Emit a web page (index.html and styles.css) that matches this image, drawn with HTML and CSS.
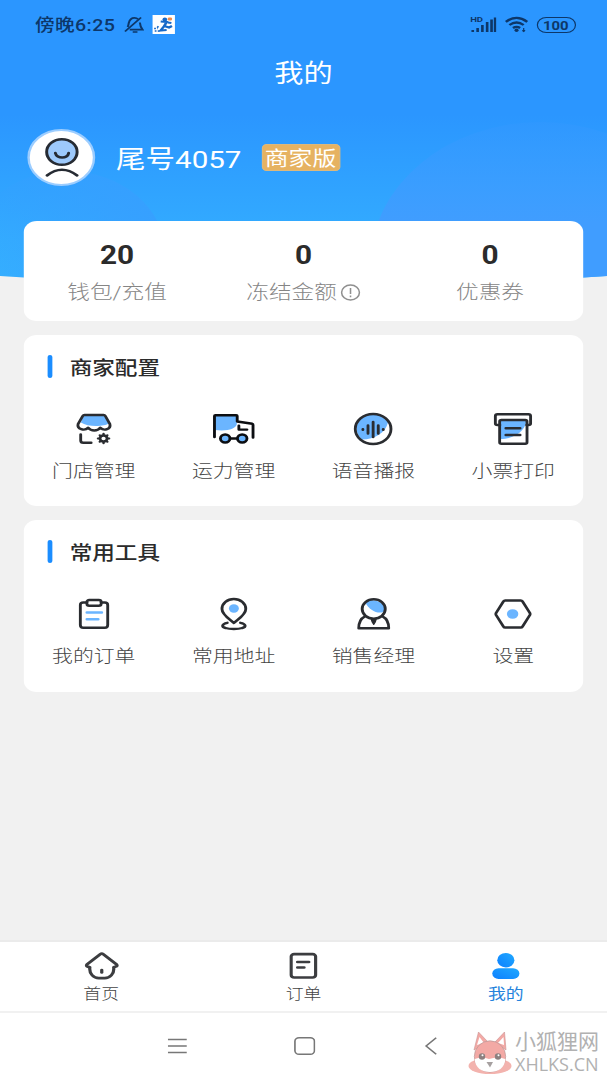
FILE: index.html
```html
<!DOCTYPE html>
<html lang="zh-CN">
  <head>
    <meta charset="UTF-8" />
    <meta name="viewport" content="width=device-width, initial-scale=1.0" />
    <title>我的</title>
    <link rel="stylesheet" href="styles.css" />
  </head>
  <body>
    <div class="screen">
      <!-- Blue backdrop -->
      <svg class="backdrop" viewBox="0 0 510 300">
        <defs>
          <linearGradient id="sky" x1="0" y1="0" x2="0" y2="1">
            <stop offset="0" stop-color="#2b96ff" />
            <stop offset="0.38" stop-color="#2b96ff" />
            <stop offset="0.8" stop-color="#33acff" />
            <stop offset="1" stop-color="#36b0ff" />
          </linearGradient>
          <linearGradient id="bubbleRight" x1="0" y1="0" x2="0" y2="1">
            <stop offset="0" stop-color="#3c98ff" stop-opacity="0.2" />
            <stop offset="0.35" stop-color="#409dff" />
            <stop offset="1" stop-color="#409dff" />
          </linearGradient>
          <linearGradient id="bubbleLeft" x1="0" y1="0.3" x2="1" y2="0">
            <stop offset="0" stop-color="#379fff" stop-opacity="0" />
            <stop offset="1" stop-color="#379fff" />
          </linearGradient>
          <clipPath id="curve"><path d="M0 0H510V276Q255 297 0 276Z" /></clipPath>
        </defs>
        <g clip-path="url(#curve)">
          <rect width="510" height="300" fill="url(#sky)" />
          <circle cx="56" cy="254" r="83" fill="url(#bubbleLeft)" />
          <circle cx="454" cy="265" r="143" fill="url(#bubbleRight)" />
        </g>
      </svg>

      <!-- Status bar -->
      <div class="status">
        <span class="time">傍晚6:25</span>
        <svg class="bell" width="17" height="18" viewBox="0 0 17 18">
          <path d="M3.200 11C4 9.500 3.900 8.500 4.200 7C4.800 4 6.500 1.800 9 1.800C10.200 1.800 11.300 2.300 12 3.200M13.500 6.500C13.700 9.500 14 11 15.800 13.700H5" />
          <path d="M7.500 16H11.500M1 15.500L14.500 1.500" />
        </svg>
        <svg class="app" width="19" height="19" viewBox="0 0 19 19">
          <rect width="19" height="19" fill="#fff" />
          <circle cx="10.500" cy="4.500" r="2" fill="#1769c8" />
          <rect x="13" y="2.500" width="3.500" height="3" rx="1" fill="#ee8b4b" />
          <path d="M7 6.500L12 7L10 11L14 12.500L16.500 11M10 11L7 15.500L12 15M13 7.500L16 8" fill="none" stroke="#1769c8" stroke-width="2.200" />
          <path d="M1.500 13.500H4.500M2 16H6M4 11.500L6 13" fill="none" stroke="#1769c8" stroke-dasharray="1.500 1" />
        </svg>
        <span class="grow"></span>
        <svg class="signal" width="22" height="17" viewBox="0 0 22 17">
          <text x="0" y="6.300">HD</text>
          <path d="M2.200 16V14M6.300 16V12M10.300 16V9M14.300 16V6M18 16V3.500M21 16V1.500" />
        </svg>
        <svg class="wifi" width="20" height="17" viewBox="0 0 20 17">
          <path d="M1 5.800Q10 -2 19 5.800M4 9Q10 4 16 9M7 12Q10 9.800 13 12" />
          <circle cx="10" cy="14.200" r="1.700" />
          <path class="thin" d="M16 12V15.500M14.800 14.400L16 15.600L17.200 14.400" />
        </svg>
        <span class="battery">100</span>
      </div>

      <h1 class="title">我的</h1>

      <!-- Profile -->
      <div class="profile">
        <div class="avatar">
          <svg width="30" height="42" viewBox="0 0 30 42">
            <circle cx="15" cy="16" r="12.800" fill="#9dc9fb" />
            <path d="M9.500 17C10.500 23 20 23 20.700 17M2.500 39.500Q15 28 27.800 39.500" />
          </svg>
        </div>
        <span class="name">尾号4057</span>
        <span class="badge">商家版</span>
      </div>

      <main class="content">
        <section class="card stats">
          <div class="stat"><b>20</b><span>钱包/充值</span></div>
          <div class="stat">
            <b>0</b>
            <span>冻结金额<svg class="info" width="17" height="17" viewBox="0 0 17 17"><circle cx="8.500" cy="8.500" r="7.500" /><path d="M8.500 4V10M8.500 11.500V13.200" /></svg></span>
          </div>
          <div class="stat"><b>0</b><span>优惠券</span></div>
        </section>

        <section class="card panel">
          <h2>商家配置</h2>
          <div class="menu">
            <a class="item">
              <svg width="30" height="31" viewBox="0 0 30 31">
                <path class="tint" d="M6 2H24L27.500 10C24 13 10 14 4 9Z" />
                <path d="M7 1.500H23Q24 1.500 24.500 2.500L28.300 10.500C29.500 15.500 23.500 18 20.300 14.200C18 18 12.500 18 10 14.200C7 18 .5 15.500 1.600 10.500L5.500 2.500Q6 1.500 7 1.500Z" />
                <path d="M3.800 21V27Q3.800 29.300 6 29.300H12.600" />
                <circle cx="23" cy="25" r="3" />
                <path class="teeth" d="M23 21.500V20.300M23 28.500V29.700M19.500 25H18.300M26.500 25H27.700M20.500 22.500L19.800 21.800M25.500 22.500L26.200 21.800M20.500 27.500L19.800 28.200M25.500 27.500L26.200 28.200" />
              </svg>
              <span>门店管理</span>
            </a>
            <a class="item">
              <svg class="dark" width="35" height="30" viewBox="0 0 35 30">
                <path class="tint" d="M1.500 1.500H20V10C19 15 12 17.500 1.500 16Z" />
                <path d="M1.200 23V2Q1.200 1.200 2 1.200H19.500Q20.300 1.200 20.300 2V7.500L33 9.800Q33.600 10 33.600 11V23.500" />
                <path d="M21.700 11.700V15.600H28.500M14.500 24.500H20" />
                <circle class="wheel" cx="10.200" cy="24.500" r="4" />
                <circle class="wheel" cx="24.500" cy="24.500" r="4" />
              </svg>
              <span>运力管理</span>
            </a>
            <a class="item">
              <svg width="33" height="33" viewBox="0 0 33 33">
                <path class="tint" d="M16 2C23 2 28 5 29 10C27 20 18 27 7 27C0 20 0 4 16 2Z" />
                <circle cx="16.500" cy="16.500" r="15" />
                <path d="M7.900 16.800V17.200M12.200 13V21M16.500 9.500V24.500M20.800 13V21M25 16.800V17.200" />
              </svg>
              <span>语音播报</span>
            </a>
            <a class="item">
              <svg width="32" height="32" viewBox="0 0 32 32">
                <path class="tint" d="M5 7H27.500C27 15 20 26 5 26Z" />
                <path d="M5 12H3Q1.200 12 1.200 10.500V3Q1.200 1.300 3 1.300H29Q30.800 1.300 30.800 3V10.500Q30.800 12 29 12H27.500" />
                <rect x="4.800" y="7" width="23" height="23.700" rx="1.500" />
                <path d="M10 15.300H22M10 22H22" />
              </svg>
              <span>小票打印</span>
            </a>
          </div>
        </section>

        <section class="card panel tools">
          <h2>常用工具</h2>
          <div class="menu">
            <a class="item">
              <svg width="26" height="31" viewBox="0 0 26 31">
                <path d="M7 4H4Q1.500 4 1.500 6.500V26.500Q1.500 29.300 4 29.300H22Q24.500 29.300 24.500 26.500V6.500Q24.500 4 22 4H19" />
                <rect x="7" y="1.500" width="12" height="5.800" rx="2" />
                <path class="blue" d="M7 14H19.500M7 20.700H16.500" />
              </svg>
              <span>我的订单</span>
            </a>
            <a class="item">
              <svg width="23" height="33" viewBox="0 0 23 33">
                <path d="M11.500 25.500C8.500 22 1.500 17.500 1.500 11.500A10 10 0 0 1 21.500 11.500C21.500 17.500 14.500 22 11.500 25.500Z" />
                <circle class="dot" cx="11.500" cy="11" r="4.200" />
                <path d="M6 25.300C1 26.500 1 29.500 4.500 30.500C8 31.900 15 31.900 18.500 30.500C22 29.500 22 26.500 17 25.300" />
              </svg>
              <span>常用地址</span>
            </a>
            <a class="item">
              <svg width="28" height="32" viewBox="0 0 28 32">
                <path class="tint" d="M7 4C13 0 23 3 23.500 12C21 17.500 10 14 7 4Z" />
                <circle cx="14" cy="11" r="9.700" />
                <path d="M6.500 18.500C3 20.500 1.400 25 1.400 30.300H26.600C26.600 25 25 20.500 21.500 18.500" />
                <path class="tie" d="M12 21.500H16L15.300 24L14 26.500L12.700 24Z" />
              </svg>
              <span>销售经理</span>
            </a>
            <a class="item">
              <svg width="32" height="30" viewBox="0 0 32 30">
                <path d="M9.500 1.500H22.500Q23.500 1.500 24 2.400L30.200 14Q30.600 15 30.200 16L24 27.600Q23.500 28.500 22.500 28.500H9.500Q8.500 28.500 8 27.600L1.800 16Q1.400 15 1.800 14L8 2.400Q8.500 1.500 9.500 1.500Z" />
                <circle class="dot" cx="15.700" cy="15" r="4.800" />
              </svg>
              <span>设置</span>
            </a>
          </div>
        </section>
      </main>

      <!-- Tabs -->
      <nav class="tabs">
        <a class="tab">
          <svg width="29" height="28" viewBox="0 0 29 28">
            <path d="M13.200 2.200Q14.500 1 15.800 2.200L27 12.500Q28 14 26.300 14.600L24.500 15.200C25.300 22 21 26.200 17 26.200H12C8 26.200 3.700 22 4.500 15.200L2.700 14.600Q1 14 2 12.500Z" />
            <path d="M14.500 18V20.500" />
          </svg>
          <span>首页</span>
        </a>
        <a class="tab">
          <svg width="24" height="27" viewBox="0 0 24 27">
            <rect x="1.600" y="1.600" width="20.600" height="23.400" rx="2.500" />
            <path d="M7 9.500H16.500M7 15H12.500" />
          </svg>
          <span>订单</span>
        </a>
        <a class="tab active">
          <svg width="24" height="27" viewBox="0 0 24 27">
            <defs>
              <linearGradient id="person" x1="0" y1="1" x2="1" y2="0">
                <stop offset="0" stop-color="#0d80ff" />
                <stop offset="1" stop-color="#20a9ff" />
              </linearGradient>
            </defs>
            <circle cx="12" cy="7.700" r="7.200" fill="url(#person)" />
            <rect x=".6" y="15.700" width="22.800" height="10.700" rx="5.300" fill="url(#person)" />
          </svg>
          <span>我的</span>
        </a>
      </nav>

      <!-- System navigation -->
      <div class="sysnav">
        <svg width="16" height="16" viewBox="0 0 16 16"><path d="M0 1.500H16M0 8H16M0 14.500H16" /></svg>
        <svg width="18" height="18" viewBox="0 0 18 18"><rect x=".8" y=".8" width="16.400" height="16.400" rx="3.500" /></svg>
        <svg width="16" height="18" viewBox="0 0 16 18"><path d="M12.500 .8L4 9L12.500 17.200" /></svg>
      </div>
    </div>

    <!-- Site mark -->
    <div class="mark">
      <svg width="44" height="45" viewBox="0 0 44 45">
        <ellipse cx="22" cy="35" rx="21.500" ry="8" fill="#f3b3ae" />
        <path d="M6 19L10.500 1L20 11Z" fill="#f3a9a5" stroke="#c79292" stroke-width=".6" />
        <path d="M27 11L36.500 1L38 19Z" fill="#f3a9a5" stroke="#c79292" stroke-width=".6" />
        <path d="M9 14L11.500 6L16 12ZM30 12L35.500 6L36 14Z" fill="#fff" />
        <circle cx="22" cy="25.500" r="15.700" fill="#f3a9a5" stroke="#b99a9a" stroke-width=".7" />
        <path d="M6.700 28Q14 25 21 28Q30 25 37.300 28C37 37 30 41 22 41S7 37 6.700 28Z" fill="#fff" />
        <circle cx="14" cy="25.500" r="3.200" fill="#8d8080" />
        <circle cx="30" cy="25.500" r="3.200" fill="#8d8080" />
        <circle cx="14.500" cy="24.300" r="1" fill="#fff" />
        <circle cx="30.500" cy="24.300" r="1" fill="#fff" />
        <path d="M18.500 31H25L22 36.500Z" fill="#a6a0a0" />
      </svg>
      <div class="mark-text"><span>小狐狸网</span><span class="mark-url">XHLKS.CN</span></div>
    </div>
  </body>
</html>
```
FILE: styles.css
```css
* {
  margin: 0;
  padding: 0;
  box-sizing: border-box;
}

body {
  width: 607px;
  height: 1080px;
  overflow: hidden;
  position: relative;
  background: #f1f1f1;
  font-family: Roboto, "Noto Sans CJK SC", sans-serif;
}

svg {
  display: block;
  flex: none;
}

/* 510px layout stretched to the full window width */
.screen {
  position: relative;
  display: flex;
  flex-direction: column;
  width: 510px;
  height: 1080px;
  transform: scaleX(1.1902);
  transform-origin: 0 0;
}

.backdrop {
  position: absolute;
  top: 0;
  left: 0;
  width: 510px;
  height: 300px;
  z-index: -1;
}

/* Status bar */
.status {
  display: flex;
  align-items: center;
  height: 49px;
  padding: 0 26.5px 0 29.5px;
  color: #0d3769;
}

.status svg {
  fill: none;
  stroke: #0d3769;
  stroke-width: 1.7;
}

.time {
  width: 74px;
  padding-bottom: 2px;
  font-size: 16.5px;
  font-weight: 500;
  letter-spacing: 0.3px;
  white-space: nowrap;
}

.status .app {
  margin-left: 7px;
  stroke: none;
}

.grow {
  flex: 1;
}

.status .signal {
  stroke-width: 2.2;
}

.signal text {
  font-size: 8px;
  font-weight: 700;
  fill: #0d3769;
  stroke: none;
}

.status .wifi {
  margin: 0 7px 0 7px;
  stroke-width: 2.2;
}

.wifi circle {
  fill: #0d3769;
  stroke: none;
}

.wifi .thin {
  stroke-width: 1;
}

.battery {
  width: 33px;
  height: 16px;
  border: 1.5px solid #0d3769;
  border-radius: 8px;
  font-size: 12.5px;
  font-weight: 700;
  line-height: 15px;
  text-align: center;
}

.title {
  height: 46px;
  font-size: 24.5px;
  font-weight: 400;
  line-height: 49px;
  text-align: center;
  color: #fff;
}

/* Profile */
.profile {
  display: flex;
  align-items: center;
  height: 126px;
  padding: 0 0 2px 23px;
  color: #fff;
}

.avatar {
  display: flex;
  justify-content: center;
  align-items: center;
  width: 57px;
  height: 57px;
  border: 2.5px solid #9ccdff;
  border-radius: 50%;
  background: #fff;
}

.avatar svg {
  fill: none;
  stroke: #262b33;
  stroke-width: 2.5;
  stroke-linecap: round;
}

.avatar circle {
  stroke: #262b33;
}

.name {
  width: 122px;
  margin-left: 17.5px;
  font-size: 24.8px;
  white-space: nowrap;
}

.badge {
  width: 66px;
  height: 27px;
  border: 1px solid #dcb87c;
  border-radius: 4px;
  background: #e6b261;
  font-size: 20px;
  line-height: 28px;
  text-align: center;
}

/* Cards */
.content {
  flex: 1;
  display: flex;
  flex-direction: column;
  gap: 14.5px;
  padding: 0 20px;
}

.card {
  border-radius: 11px;
  background: #fff;
}

.stats {
  display: grid;
  grid-template-columns: repeat(3, 1fr);
  height: 99.5px;
  padding-top: 17px;
}

.stat {
  display: flex;
  flex-direction: column;
  align-items: center;
}

.stat b {
  height: 37px;
  font-size: 25px;
  line-height: 35px;
  color: #2b2b2b;
}

.stat span {
  display: flex;
  align-items: center;
  font-size: 19px;
  font-weight: 300;
  line-height: 35px;
  color: #858585;
}

.info {
  margin-left: 3px;
  fill: none;
  stroke: #8f8f8f;
  stroke-width: 1.3;
}

.panel {
  height: 170.5px;
  padding-top: 17px;
}

.tools {
  height: 172px;
}

.panel h2 {
  display: flex;
  align-items: center;
  height: 28px;
  padding-left: 19.5px;
  font-size: 19px;
  font-weight: 500;
  color: #2b2b2b;
}

.panel h2::before {
  content: "";
  width: 4.5px;
  height: 23px;
  margin-right: 14.5px;
  border-radius: 2px;
  background: #1b8dff;
}

.menu {
  display: grid;
  grid-template-columns: repeat(4, 1fr);
  padding-top: 29px;
}

.item {
  display: flex;
  flex-direction: column;
  align-items: center;
  font-size: 17.5px;
  font-weight: 300;
  color: #444;
}

.item span {
  margin-top: 9px;
  line-height: 26px;
}

.item svg {
  height: 40px;
  overflow: visible;
  fill: none;
  stroke: #2a2c30;
  stroke-width: 2.4;
  stroke-linecap: round;
  stroke-linejoin: round;
}

.item .dark {
  stroke: #0c0e12;
}

.item .tint,
.item .dot {
  fill: #6bb5ff;
  stroke: none;
}

.item .teeth {
  stroke-width: 2;
}

.item .wheel {
  fill: #6bb5ff;
}

.item .blue {
  stroke: #6bb5ff;
}

.item .tie {
  fill: #2a2c30;
  stroke-width: 1;
}

/* Tabs */
.tabs {
  display: grid;
  grid-template-columns: repeat(3, 1fr);
  height: 73px;
  border-top: 2px solid #ebebeb;
  border-bottom: 2px solid #f1f1f1;
  background: #fff;
}

.tab {
  display: flex;
  flex-direction: column;
  align-items: center;
  padding-top: 10px;
  font-size: 15px;
  font-weight: 300;
  color: #444;
}

.tab svg {
  height: 28px;
  fill: none;
  stroke: #3c3d40;
  stroke-width: 2.7;
  stroke-linecap: round;
  stroke-linejoin: round;
}

.tab span {
  margin-top: 3px;
  line-height: 22px;
}

.tab.active {
  font-weight: 400;
  color: #2583dc;
}

.tab.active svg {
  stroke: none;
}

/* System navigation */
.sysnav {
  display: flex;
  align-items: center;
  gap: 89.5px;
  height: 67px;
  padding: 0 0 2px 141px;
  background: #fff;
}

.sysnav svg {
  fill: none;
  stroke: #777;
  stroke-width: 1.4;
}

/* Site mark floats over the navigation bar */
.mark {
  position: absolute;
  right: 8px;
  bottom: 4px;
  display: flex;
  align-items: center;
  gap: 3px;
  color: #b1b1b1;
}

.mark-text {
  display: flex;
  flex-direction: column;
  width: 84px;
  font-size: 21px;
  line-height: 21px;
  white-space: nowrap;
}

.mark-url {
  font-family: "Open Sans", sans-serif;
  font-size: 18px;
  line-height: 22px;
}
```
